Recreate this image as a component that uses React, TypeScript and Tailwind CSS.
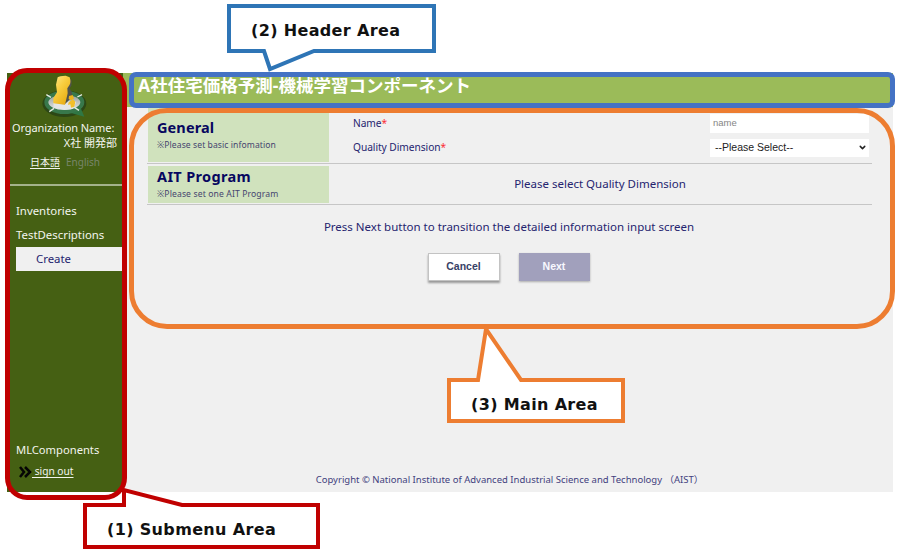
import { ChevronDown } from "lucide-react";

const sans = "font-['Noto_Sans','Noto_Sans_CJK_JP',sans-serif]";

function Logo() {
  return (
    <svg className="block h-[50px] w-[50px]" viewBox="15 15 150 150">
      <defs>
        <linearGradient id="gold" x1="0" y1="0" x2="0.8" y2="1">
          <stop offset="0" stopColor="#ffe98a" />
          <stop offset="0.45" stopColor="#f8cd3f" />
          <stop offset="1" stopColor="#e7a90e" />
        </linearGradient>
        <linearGradient id="silver" x1="0" y1="0" x2="0" y2="1">
          <stop offset="0" stopColor="#8e9691" />
          <stop offset="1" stopColor="#eef0ef" />
        </linearGradient>
      </defs>
      <ellipse cx="88" cy="107" rx="66" ry="40" fill="#2c4716" />
      <path d="M105 134 L148 146 L138 122Z" fill="#2f7744" />
      <ellipse cx="88" cy="103" rx="54" ry="29" fill="url(#silver)" stroke="#38784b" strokeWidth="12" />
      <path d="M34 80l14 8M141 80l-14 7M43 131l14-10M118 118l14 9" stroke="#e5ece2" strokeWidth="4" />
      <path d="M55 104 L88 110 L101 100 L124 101 L114 122 L92 125 L56 120Z" fill="#e4e6e5" />
      <path d="M101 26 L110 38 L109 53 L104 61 L111 75 L112 87 L89 109 L86 90 L90 56Z" fill="#50534c" />
      <path d="M68 28 Q73 24 92 23 L104 28 Q109 43 103 52 L97 61 L98 76 L90 110 L55 106 L55 90 L66 73 L63 50Z" fill="url(#gold)" />
      <path d="M102 84 L113 81 L117 92 L108 97 L101 93Z" fill="#edb31a" />
      <path d="M101 103 L114 94 L121 101 L118 116 L108 119 L106 109 L99 111Z" fill="#f2bf2b" />
    </svg>
  );
}

function Sidebar() {
  return (
    <aside className="flex w-[116px] shrink-0 flex-col bg-[#456013] text-[11.4px] text-[#f3f5ee]">
      <div className="flex h-[47px] justify-center"><Logo /></div>
      <div className="flex h-[15px] items-center pl-[5px] text-[11px] leading-none whitespace-nowrap"><span className="tracking-[-0.1px]">Organization Name:</span></div>
      <div className="flex h-[15px] items-center justify-end pr-[6px] text-[11px] leading-none">X社 開発部</div>
      <div className="mt-[4px] flex h-[16px] items-center pl-[23px] text-[10px] leading-none">
        <a className="underline underline-offset-2">日本語</a>
        <span className="ml-[6px] text-[#78866a]">English</span>
      </div>
      <div className="mt-[14px] ml-[3px] h-[2px] bg-[#a4b28b]" />
      <nav className="flex flex-col pt-[13px] pl-[9px]">
        <a className="flex h-[24px] items-center">Inventories</a>
        <a className="flex h-[24px] items-center">TestDescriptions</a>
        <a className="flex h-[24px] items-center bg-[#f0f0f0] pb-px pl-[20px] text-[#24246f]">Create</a>
      </nav>
      <div className="mt-auto flex h-[54px] flex-col pl-[9px]">
        <div className="flex h-[24px] items-center text-[11.2px]">MLComponents</div>
        <div className="flex h-[20px] items-center text-[10.2px]">
          <svg className="ml-[3px] h-[12px] w-[13px]" viewBox="0 0 13 12" fill="none" stroke="#050505" strokeWidth="2.5"><path d="M1 1l4 5-4 5M6 1l5 5-5 5" /></svg>
          <a className="whitespace-pre underline underline-offset-2"> sign out</a>
        </div>
      </div>
    </aside>
  );
}

function Main() {
  return (
    <main className="flex flex-1 flex-col pr-[21px] pl-[24px] text-[#25246f]">
      <section className="flex h-[57px] border-b border-[#c6c6c6] pl-px">
        <div className="h-[55px] w-[181px] bg-[#d0e2bd] pt-[10px] pl-[9px]">
          <h2 className="text-[14.5px] leading-[20px] font-bold tracking-[0.1px] text-[#07075f]">General</h2>
          <p className="mt-[2px] text-[8.6px] leading-[12px] tracking-[0.07px] text-[#45456f]">※Please set basic infomation</p>
        </div>
        <div className="flex flex-1 flex-col pt-[5px] pl-[24px] text-[10.2px]">
          <div className="flex h-[24px] items-center justify-between pb-px">
            <label className="tracking-[-0.05px]">Name<span className="text-red-500">*</span></label>
            <div className="mr-[3px] flex h-[19px] w-[159px] items-center bg-white pl-[3px] font-['Liberation_Sans',Arial,sans-serif] text-[9.5px] text-[#858585]">name</div>
          </div>
          <div className="flex h-[24px] items-center justify-between pb-px">
            <label className="tracking-[-0.05px]">Quality Dimension<span className="text-red-500">*</span></label>
            <div className="mr-[3px] flex h-[18px] w-[159px] items-center justify-between bg-white pr-[2px] pl-[5px] font-['Liberation_Sans',Arial,sans-serif] text-[10.5px] text-[#222]">--Please Select--<ChevronDown size={9} strokeWidth={4} /></div>
          </div>
        </div>
      </section>
      <section className="flex h-[41px] border-b border-[#c6c6c6] pt-[2px] pl-px">
        <div className="h-[37px] w-[181px] bg-[#d0e2bd] pl-[9px]">
          <h2 className="text-[14.5px] leading-[20px] font-bold tracking-[0.35px] text-[#07075f]">AIT Program</h2>
          <p className="mt-[2px] text-[8.6px] leading-[12px] tracking-[0.12px] text-[#45456f]">※Please set one AIT Program</p>
        </div>
        <div className="flex flex-1 items-center justify-center pr-px pb-[3px] text-[11.5px]">Please select Quality Dimension</div>
      </section>
      <p className="mt-[13px] pr-px text-center text-[11.5px] leading-[18px]">Press Next button to transition the detailed information input screen</p>
      <div className="mt-[17px] flex h-[28px] justify-center gap-[19px] pr-[2px] font-['Liberation_Sans',Arial,sans-serif] text-[10.5px] font-bold">
        <button className="h-[28px] w-[72px] border border-[#c3c3c3] bg-white text-[#374166] shadow-[0_2px_2px_#999]">Cancel</button>
        <button className="h-[28px] w-[71px] bg-[#a1a0bc] text-[#f8f8ff] shadow-[0_1px_2px_#aaa]">Next</button>
      </div>
      <footer className="mt-auto mb-[3px] text-center text-[9.5px] leading-[18px] whitespace-nowrap text-[#42417e]">Copyright © National Institute of Advanced Industrial Science and Technology （AIST）</footer>
    </main>
  );
}

function Annotations() {
  return (
    <div className="pointer-events-none absolute inset-0 font-['DejaVu_Sans',Verdana,sans-serif] text-[16px] leading-[24px] font-bold tracking-[0.35px] whitespace-nowrap text-[#111]">
      <div className="absolute top-[68px] left-[5px] h-[432px] w-[122px] rounded-[22px] border-5 border-[#c00000]" />
      <div className="absolute top-[108px] left-[129px] h-[221px] w-[766px] rounded-[38px] border-5 border-[#ed7d31]" />
      <div className="absolute top-[72px] left-[129px] h-[36px] w-[766px] rounded-[7px] border-5 border-[#4472c4]" />
      <svg className="absolute inset-0 h-[559px] w-[901px]" viewBox="0 0 901 559" fill="#fff" strokeWidth="4">
        <path stroke="#2e75b6" d="M229 6H434V51H314L270 69L264 51H229Z" />
        <path stroke="#ed7d31" d="M449 380H478L486 329L521 380H623V421H449Z" />
        <path stroke="#c00000" d="M85 505H124V490L182 505H318V547H85Z" />
      </svg>
      <div className="absolute top-[19px] left-[251px]">(2) Header Area</div>
      <div className="absolute top-[393px] left-[471px]">(3) Main Area</div>
      <div className="absolute top-[518px] left-[107px]">(1) Submenu Area</div>
    </div>
  );
}

export default function App() {
  return (
    <div className={`relative h-[559px] w-[901px] overflow-hidden bg-white pt-[73px] pl-[7px] ${sans}`}>
      <div className="flex h-[419px] w-[886px] bg-[#f0f0f0]">
        <Sidebar />
        <div className="flex min-w-0 flex-1 flex-col">
          <header className="flex h-[34px] shrink-0 items-center bg-[#9bbb59] pb-[9px] pl-[15px] text-[17.5px] leading-none font-bold tracking-[0.02px] whitespace-nowrap text-white">A社住宅価格予測-機械学習コンポーネント</header>
          <Main />
        </div>
      </div>
      <Annotations />
    </div>
  );
}
